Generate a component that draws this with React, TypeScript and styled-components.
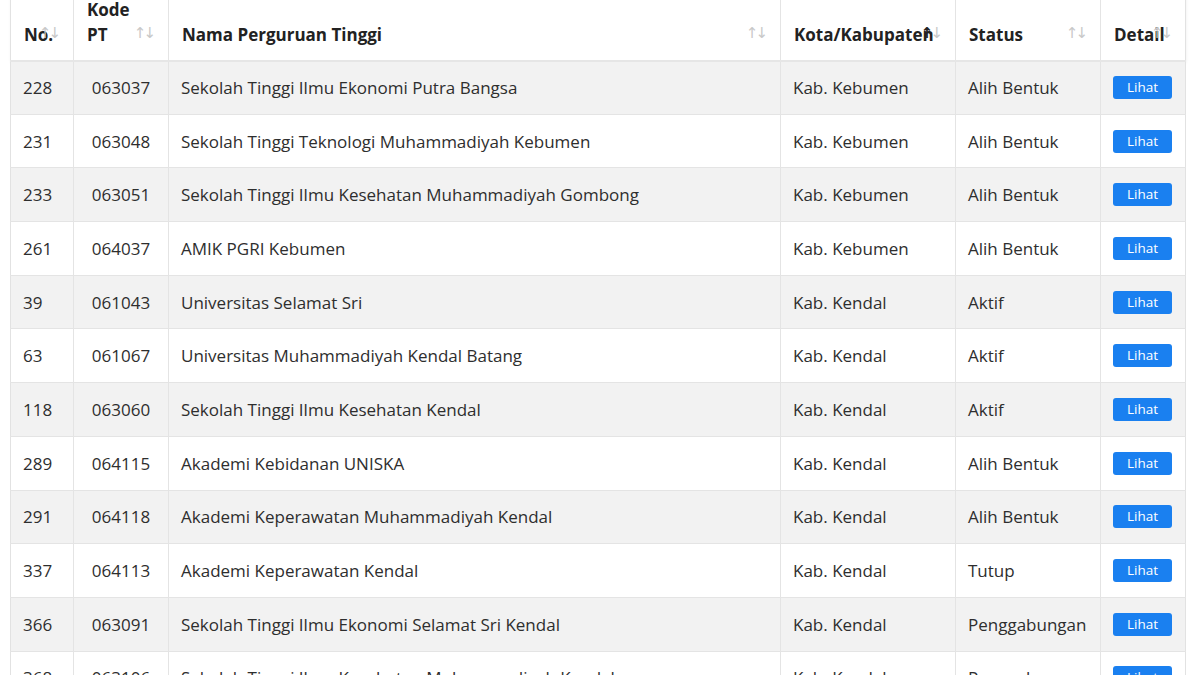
import React from "react";
import styled, { createGlobalStyle } from "styled-components";

const GlobalStyle = createGlobalStyle`
  html, body {
    margin: 0;
    padding: 0;
    background: #ffffff;
    overflow: hidden;
  }
  body {
    font-family: "Open Sans", "Noto Sans", "Liberation Sans", sans-serif;
    color: #2b2b2b;
  }
`;

const Page = styled.div`
  width: 1200px;
  height: 675px;
  overflow: hidden;
  padding: 0 15px 0 10px;
  box-sizing: border-box;
`;

const Table = styled.table`
  width: 1175px;
  margin-top: -13.5px;
  border-collapse: collapse;
  table-layout: fixed;
  font-size: 17px;
  border-left: 1px solid #e2e2e2;
  border-right: 1px solid #e2e2e2;
`;

const Head = styled.thead`
  box-shadow: 0 2px 3px rgba(0, 0, 0, 0.08);
`;

const HeadCell = styled.th`
  position: relative;
  text-align: left;
  vertical-align: bottom;
  font-weight: 700;
  line-height: 25px;
  padding: 10px 12px 13px 13px;
  color: #222;
  border-left: 1px solid #e4e4e4;
  border-bottom: 2px solid #e6e6e6;
  &:first-child {
    border-left: none;
  }
`;

const Arrows = styled.span`
  position: absolute;
  right: 12px;
  bottom: 18px;
  display: flex;
  font-family: "DejaVu Sans", sans-serif;
  font-size: 15px;
  line-height: 18px;
  font-weight: 400;
`;

const Arrow = styled.span<{ $on?: boolean }>`
  color: ${(p) => (p.$on ? "#222" : "#c8c8c8")};
  font-weight: ${(p) => (p.$on ? 700 : 400)};
  & + & {
    margin-left: -3px;
  }
`;

const Row = styled.tr<{ $striped: boolean }>`
  height: 53.7px;
  background: ${(p) => (p.$striped ? "#f2f2f2" : "#ffffff")};
`;

const Cell = styled.td<{ $center?: boolean }>`
  padding: 0 12px;
  text-align: ${(p) => (p.$center ? "center" : "left")};
  vertical-align: middle;
  border-left: 1px solid #e4e4e4;
  border-bottom: 1px solid #e4e4e4;
  white-space: nowrap;
  overflow: hidden;
  color: #2e2e2e;
  &:first-child {
    border-left: none;
  }
`;

const Button = styled.button`
  display: block;
  width: 59px;
  height: 23px;
  padding: 0;
  border: none;
  border-radius: 3px;
  background: #1a80f0;
  color: #ffffff;
  font-family: "Open Sans", "Noto Sans", sans-serif;
  font-size: 13.5px;
  line-height: 23px;
  cursor: pointer;
`;

type Item = [string, string, string, string, string];

const rows: Item[] = [
  ["228", "063037", "Sekolah Tinggi Ilmu Ekonomi Putra Bangsa", "Kab. Kebumen", "Alih Bentuk"],
  ["231", "063048", "Sekolah Tinggi Teknologi Muhammadiyah Kebumen", "Kab. Kebumen", "Alih Bentuk"],
  ["233", "063051", "Sekolah Tinggi Ilmu Kesehatan Muhammadiyah Gombong", "Kab. Kebumen", "Alih Bentuk"],
  ["261", "064037", "AMIK PGRI Kebumen", "Kab. Kebumen", "Alih Bentuk"],
  ["39", "061043", "Universitas Selamat Sri", "Kab. Kendal", "Aktif"],
  ["63", "061067", "Universitas Muhammadiyah Kendal Batang", "Kab. Kendal", "Aktif"],
  ["118", "063060", "Sekolah Tinggi Ilmu Kesehatan Kendal", "Kab. Kendal", "Aktif"],
  ["289", "064115", "Akademi Kebidanan UNISKA", "Kab. Kendal", "Alih Bentuk"],
  ["291", "064118", "Akademi Keperawatan Muhammadiyah Kendal", "Kab. Kendal", "Alih Bentuk"],
  ["337", "064113", "Akademi Keperawatan Kendal", "Kab. Kendal", "Tutup"],
  ["366", "063091", "Sekolah Tinggi Ilmu Ekonomi Selamat Sri Kendal", "Kab. Kendal", "Penggabungan"],
  ["368", "063106", "Sekolah Tinggi Ilmu Kesehatan Muhammadiyah Kendal", "Kab. Kendal", "Penggabungan"],
];

const columns: { label: React.ReactNode; width: number; active?: boolean }[] = [
  { label: "No.", width: 63 },
  { label: <>Kode<br />PT</>, width: 95 },
  { label: "Nama Perguruan Tinggi", width: 612 },
  { label: "Kota/Kabupaten", width: 175, active: true },
  { label: "Status", width: 145 },
  { label: "Detail", width: 85 },
];

export default function App() {
  return (
    <Page>
      <GlobalStyle />
      <Table>
        <colgroup>
          {columns.map((c, i) => (
            <col key={i} style={{ width: c.width }} />
          ))}
        </colgroup>
        <Head>
          <tr>
            {columns.map((c, i) => (
              <HeadCell key={i}>
                {c.label}
                <Arrows>
                  <Arrow $on={c.active}>↑</Arrow>
                  <Arrow>↓</Arrow>
                </Arrows>
              </HeadCell>
            ))}
          </tr>
        </Head>
        <tbody>
          {rows.map((r, i) => (
            <Row key={i} $striped={i % 2 === 0}>
              <Cell>{r[0]}</Cell>
              <Cell $center>{r[1]}</Cell>
              <Cell>{r[2]}</Cell>
              <Cell>{r[3]}</Cell>
              <Cell>{r[4]}</Cell>
              <Cell>
                <Button>Lihat</Button>
              </Cell>
            </Row>
          ))}
        </tbody>
      </Table>
    </Page>
  );
}
